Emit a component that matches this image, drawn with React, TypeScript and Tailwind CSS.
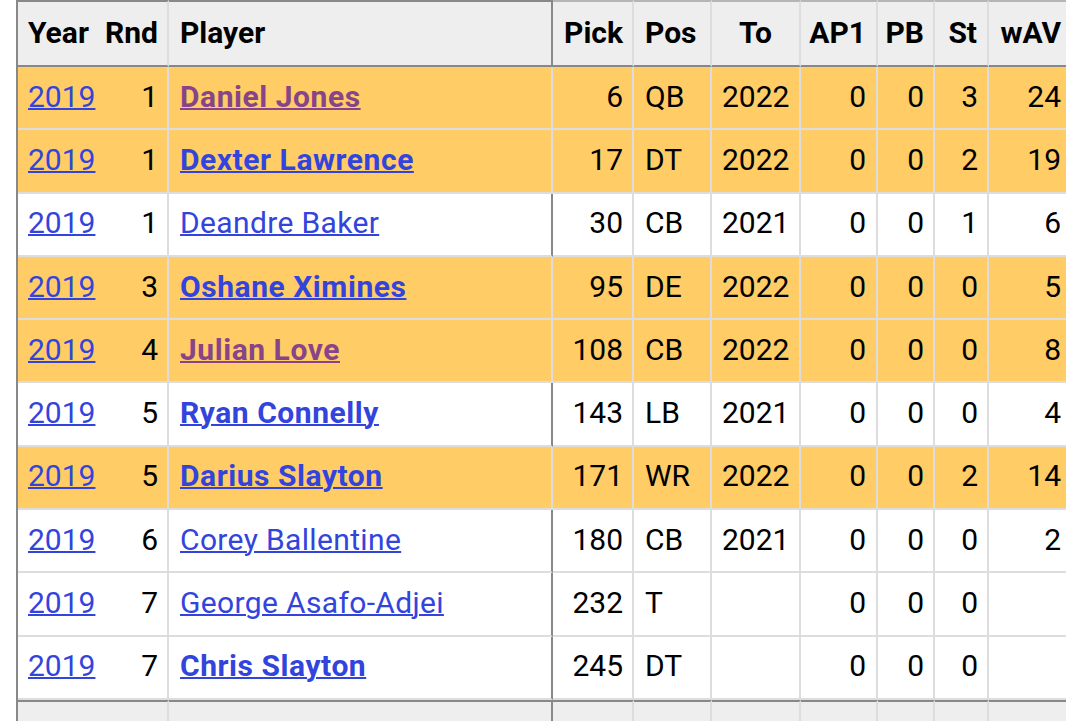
import React from "react";

type Row = {
  y: boolean;
  rnd: string;
  name: string;
  bold: boolean;
  visited?: boolean;
  pick: string;
  pos: string;
  to: string;
  ap1: string;
  pb: string;
  st: string;
  wav: string;
};

const rows: Row[] = [
  { y: true, rnd: "1", name: "Daniel Jones", bold: true, visited: true, pick: "6", pos: "QB", to: "2022", ap1: "0", pb: "0", st: "3", wav: "24" },
  { y: true, rnd: "1", name: "Dexter Lawrence", bold: true, pick: "17", pos: "DT", to: "2022", ap1: "0", pb: "0", st: "2", wav: "19" },
  { y: false, rnd: "1", name: "Deandre Baker", bold: false, pick: "30", pos: "CB", to: "2021", ap1: "0", pb: "0", st: "1", wav: "6" },
  { y: true, rnd: "3", name: "Oshane Ximines", bold: true, pick: "95", pos: "DE", to: "2022", ap1: "0", pb: "0", st: "0", wav: "5" },
  { y: true, rnd: "4", name: "Julian Love", bold: true, visited: true, pick: "108", pos: "CB", to: "2022", ap1: "0", pb: "0", st: "0", wav: "8" },
  { y: false, rnd: "5", name: "Ryan Connelly", bold: true, pick: "143", pos: "LB", to: "2021", ap1: "0", pb: "0", st: "0", wav: "4" },
  { y: true, rnd: "5", name: "Darius Slayton", bold: true, pick: "171", pos: "WR", to: "2022", ap1: "0", pb: "0", st: "2", wav: "14" },
  { y: false, rnd: "6", name: "Corey Ballentine", bold: false, pick: "180", pos: "CB", to: "2021", ap1: "0", pb: "0", st: "0", wav: "2" },
  { y: false, rnd: "7", name: "George Asafo-Adjei", bold: false, pick: "232", pos: "T", to: "", ap1: "0", pb: "0", st: "0", wav: "" },
  { y: false, rnd: "7", name: "Chris Slayton", bold: true, pick: "245", pos: "DT", to: "", ap1: "0", pb: "0", st: "0", wav: "" },
];

function HeaderRow() {
  const l = "box-border h-full flex items-center pb-[2px] border-t-2 border-b-2 border-t-[#888] border-b-[#888] bg-[#eeeeee] font-bold";
  const r = "box-border h-full flex items-center pb-[2px] border-t-2 border-b-2 border-t-[#b5b5b5] border-t-dotted border-b-[#888] bg-[#eeeeee] font-bold";
  return (
    <div className="flex h-[67px]">
      <div className={`${l} w-[90px] pl-[10px]`}>Year</div>
      <div className={`${l} w-[61px] justify-end pr-[9px] border-r-2 border-r-[#dddddd]`}>Rnd</div>
      <div className={`${l} w-[384px] pl-[11px] border-r-2 border-r-[#888]`}>Player</div>
      <div className={`${r} w-[81px] justify-end pr-[9px] border-r-2 border-r-[#dddddd]`}>Pick</div>
      <div className={`${r} w-[78px] pl-[11px] border-r-2 border-r-[#dddddd]`}>Pos</div>
      <div className={`${r} w-[89px] justify-center border-r-2 border-r-[#dddddd]`}>To</div>
      <div className={`${r} w-[77px] justify-end pr-[10px] border-r-2 border-r-[#dddddd]`}>AP1</div>
      <div className={`${r} w-[57px] justify-end pr-[9px] border-r-2 border-r-[#dddddd]`}>PB</div>
      <div className={`${r} w-[54px] justify-end pr-[10px] border-r-2 border-r-[#dddddd]`}>St</div>
      <div className={`${r} w-[77px] justify-end pr-[5px]`}>wAV</div>
    </div>
  );
}

function DataRow({ row }: { row: Row }) {
  const bg = row.y ? "bg-[#ffcc66]" : "bg-white";
  const leftB = row.y
    ? "border-b-2 border-b-[#dddddd] border-b-dotted"
    : "border-b-2 border-b-[#dddddd]";
  const l = `box-border h-full flex items-center pb-[3px] ${bg} ${leftB}`;
  const r = `box-border h-full flex items-center pb-[3px] ${bg} border-b-2 border-b-[#dddddd] border-b-dotted`;
  const link = "underline decoration-2";
  const nameColor = row.visited ? "text-[#884488]" : "text-[#3344dd]";
  const nameWeight = row.bold ? "font-bold tracking-[0.55px]" : "font-normal tracking-[0.35px]";
  return (
    <div className="flex h-[63.3px]">
      <div className={`${l} w-[90px] pl-[10px]`}>
        <a className={`${link} text-[#3344dd]`}>2019</a>
      </div>
      <div className={`${l} w-[61px] justify-end pr-[9px] border-r-2 border-r-[#dddddd]`}>{row.rnd}</div>
      <div
        className={`${l} w-[384px] pl-[11px] border-r-2 ${row.y ? "border-r-[#dddddd]" : "border-r-[#888]"}`}
      >
        <a className={`${link} ${nameColor} ${nameWeight} whitespace-nowrap`}>{row.name}</a>
      </div>
      <div className={`${r} w-[81px] justify-end pr-[9px] border-r-2 border-r-[#dddddd]`}>{row.pick}</div>
      <div className={`${r} w-[78px] pl-[11px] border-r-2 border-r-[#dddddd]`}>{row.pos}</div>
      <div className={`${r} w-[89px] pl-[10px] border-r-2 border-r-[#dddddd]`}>{row.to}</div>
      <div className={`${r} w-[77px] justify-end pr-[10px] border-r-2 border-r-[#dddddd]`}>{row.ap1}</div>
      <div className={`${r} w-[57px] justify-end pr-[9px] border-r-2 border-r-[#dddddd]`}>{row.pb}</div>
      <div className={`${r} w-[54px] justify-end pr-[9px] border-r-2 border-r-[#dddddd]`}>{row.st}</div>
      <div className={`${r} w-[77px] justify-end pr-[5px]`}>{row.wav}</div>
    </div>
  );
}

function FooterRow() {
  const c = "box-border h-full border-t-2 border-t-[#888] bg-[#eeeeee]";
  return (
    <div className="flex h-[30px]">
      <div className={`${c} w-[90px]`} />
      <div className={`${c} w-[61px] border-r-2 border-r-[#dddddd]`} />
      <div className={`${c} w-[384px] border-r-2 border-r-[#888]`} />
      <div className={`${c} w-[81px] border-r-2 border-r-[#dddddd]`} />
      <div className={`${c} w-[78px] border-r-2 border-r-[#dddddd]`} />
      <div className={`${c} w-[89px] border-r-2 border-r-[#dddddd]`} />
      <div className={`${c} w-[77px] border-r-2 border-r-[#dddddd]`} />
      <div className={`${c} w-[57px] border-r-2 border-r-[#dddddd]`} />
      <div className={`${c} w-[54px] border-r-2 border-r-[#dddddd]`} />
      <div className={`${c} w-[77px]`} />
    </div>
  );
}

export default function App() {
  return (
    <div className="w-[1080px] h-[721px] overflow-hidden bg-white font-['Roboto',sans-serif] text-[30px] leading-normal text-black">
      <div className="ml-[16px] w-[1050px] border-l-2 border-l-[#888]">
        <HeaderRow />
        {rows.map((row, i) => (
          <DataRow key={i} row={row} />
        ))}
        <FooterRow />
      </div>
    </div>
  );
}
